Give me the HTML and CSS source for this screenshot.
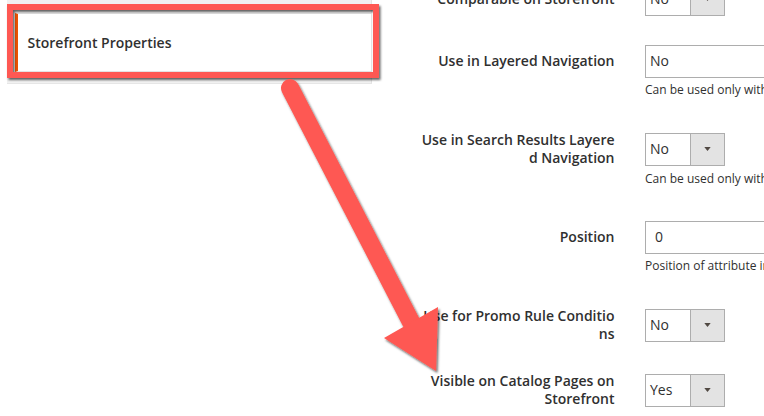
FILE: index.html
```html
<!DOCTYPE html>
<html lang="en">
<head>
<meta charset="utf-8">
<title>Storefront Properties</title>
<link rel="stylesheet" href="styles.css">
</head>
<body>
<div class="page">
  <aside class="side">
    <div class="tabs">
      <div class="tab">Storefront Properties</div>
    </div>
  </aside>
  <main class="form">
    <div class="field">
      <label class="label">Comparable on Storefront</label>
      <div class="select small"><span class="value">No</span><span class="arrow"><svg width="8" height="5" viewBox="0 0 8 5"><path d="M0 0H8L4 5Z"/></svg></span></div>
    </div>
    <div class="field">
      <label class="label">Use in Layered Navigation</label>
      <div class="select wide"><span class="value">No</span></div>
      <p class="note">Can be used only with catalog input type Dropdown, Multiple Select and Price.</p>
    </div>
    <div class="field">
      <label class="label">Use in Search Results Layered Navigation</label>
      <div class="select small"><span class="value">No</span><span class="arrow"><svg width="8" height="5" viewBox="0 0 8 5"><path d="M0 0H8L4 5Z"/></svg></span></div>
      <p class="note">Can be used only with catalog input type Dropdown, Multiple Select and Price.</p>
    </div>
    <div class="field">
      <label class="label">Position</label>
      <div class="input"><span class="value">0</span></div>
      <p class="note">Position of attribute in layered navigation block.</p>
    </div>
    <div class="field">
      <label class="label">Use for Promo Rule Conditions</label>
      <div class="select small"><span class="value">No</span><span class="arrow"><svg width="8" height="5" viewBox="0 0 8 5"><path d="M0 0H8L4 5Z"/></svg></span></div>
    </div>
    <div class="field">
      <label class="label">Visible on Catalog Pages on Storefront</label>
      <div class="select small"><span class="value">Yes</span><span class="arrow"><svg width="8" height="5" viewBox="0 0 8 5"><path d="M0 0H8L4 5Z"/></svg></span></div>
    </div>
  </main>
  <svg class="annot" width="764" height="416" viewBox="0 0 764 416">
    <defs>
      <filter id="sh" x="-20%" y="-20%" width="140%" height="140%">
        <feDropShadow dx="1.5" dy="2" stdDeviation="1.3" flood-color="#000" flood-opacity="0.6"/>
      </filter>
    </defs>
    <g filter="url(#sh)">
      <rect x="10" y="7" width="366" height="68" fill="none" stroke="#fe5952" stroke-width="6"/>
    </g>
    <g filter="url(#sh)">
      <line x1="290" y1="88" x2="411" y2="322" stroke="#fe5952" stroke-width="18" stroke-linecap="round"/>
      <polygon points="384,338 438,307 436,371" fill="#fe5952"/>
    </g>
  </svg>
</div>
</body>
</html>
```
FILE: styles.css
```css
html, body {
  margin: 0;
  padding: 0;
  overflow: hidden;
  background: #fff;
}
body {
  font-family: "Open Sans", "Liberation Sans", sans-serif;
  color: #303030;
}
.page {
  position: relative;
  display: flex;
  width: 764px;
  height: 416px;
  overflow: hidden;
}
.side {
  width: 380px;
  flex: none;
}
.tabs {
  margin-left: 7px;
  width: 365px;
  height: 84px;
  box-sizing: border-box;
  padding-top: 13px;
  background: #f1f1f1;
  border-right: 1px solid #e3e3e3;
  border-bottom: 1px solid #e6e6e6;
}
.tab {
  margin-left: 8px;
  height: 59px;
  box-sizing: border-box;
  background: #fff;
  border-left: 3px solid #eb5202;
  border-top: 1px solid #e3e3e3;
  border-bottom: 1px solid #e3e3e3;
  padding-left: 9.5px;
  display: flex;
  align-items: center;
  font-size: 14px;
  line-height: 18px;
  font-weight: 600;
  color: #303030;
}
.form {
  flex: 1;
  padding-left: 41px;
  overflow: hidden;
}
.field {
  display: grid;
  grid-template-columns: 193.5px 1fr;
  column-gap: 30.5px;
  align-items: center;
  margin-bottom: 29px;
}
.field:first-child {
  margin-top: -17.5px;
}
.label {
  grid-column: 1;
  text-align: right;
  font-size: 14px;
  line-height: 18px;
  font-weight: 600;
  word-break: break-all;
  color: #303030;
}
.select, .input {
  grid-column: 2;
  height: 33px;
  box-sizing: border-box;
  border: 1px solid #adadad;
  background: #fff;
  display: flex;
  align-items: center;
  font-size: 14px;
  line-height: 18px;
  color: #303030;
}
.select .value {
  padding-left: 4px;
}
.small {
  width: 80px;
}
.wide, .input {
  width: 300px;
}
.input .value {
  padding-left: 9px;
}
.arrow {
  margin-left: auto;
  width: 34px;
  height: 100%;
  box-sizing: border-box;
  border-left: 1px solid #adadad;
  background: #e3e3e3;
  display: flex;
  align-items: center;
  justify-content: center;
}
.arrow svg {
  display: block;
  fill: #514943;
  width: 7px;
  height: 4px;
}
.note {
  grid-column: 2;
  margin: 3px 0 3.5px;
  font-size: 12px;
  line-height: 18px;
  white-space: nowrap;
  color: #303030;
}
.annot {
  position: absolute;
  top: 0;
  left: 0;
  pointer-events: none;
}
```
